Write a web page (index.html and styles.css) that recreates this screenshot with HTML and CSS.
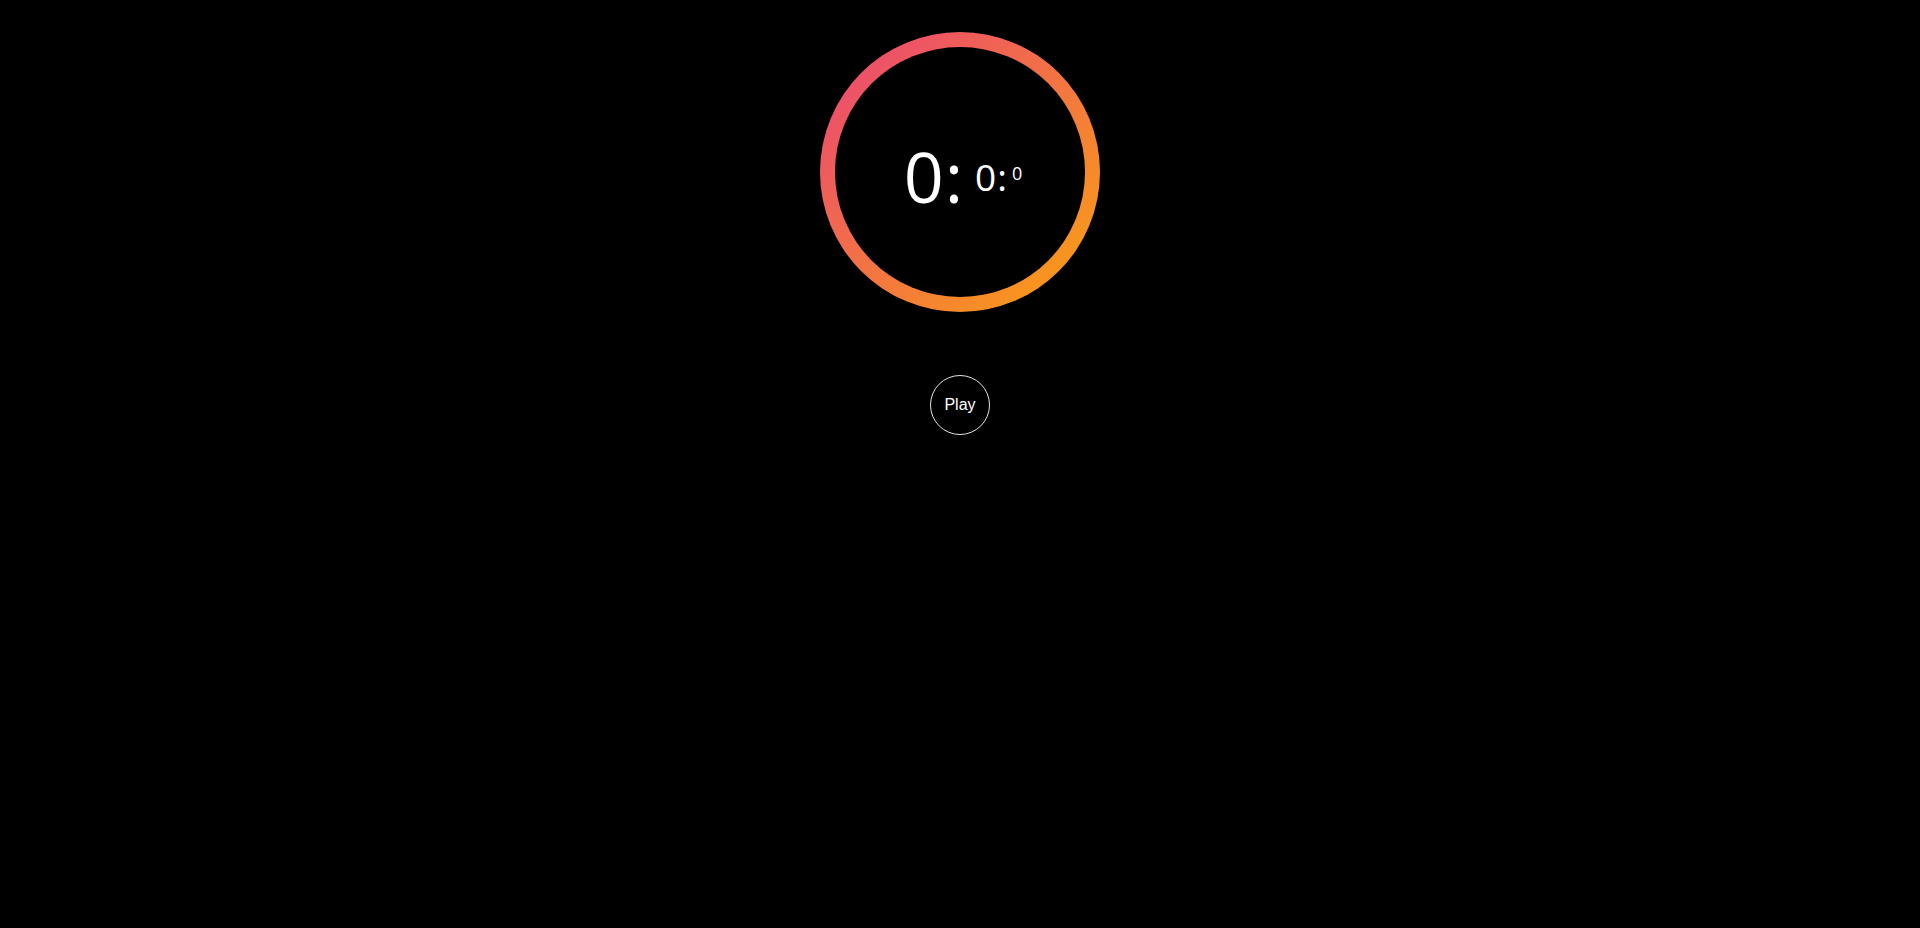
FILE: index.html
```html
<!DOCTYPE html>
<html>
<head>
<meta charset="utf-8">
<title>Timer</title>
<link rel="stylesheet" href="styles.css">
</head>
<body>
<main class="app">
  <div class="ring">
    <div class="face">
      <div class="time">
        <span class="unit unit-h">0<span class="colon">:</span></span>
        <span class="unit unit-m">0<span class="colon">:</span></span>
        <span class="unit unit-s">0</span>
      </div>
    </div>
  </div>
  <button class="play">Play</button>
</main>
</body>
</html>
```

FILE: styles.css
```css
html, body {
  margin: 0;
  padding: 0;
  background: #000;
  height: 100%;
}
.app {
  display: flex;
  flex-direction: column;
  align-items: center;
  padding-top: 32px;
}
.ring {
  width: 280px;
  height: 280px;
  box-sizing: border-box;
  padding: 15px;
  border-radius: 50%;
  background: linear-gradient(135deg, #ea4377 0%, #fba30f 100%);
}
.face {
  width: 100%;
  height: 100%;
  border-radius: 50%;
  background: #000;
  display: flex;
  align-items: center;
  justify-content: center;
}
.time {
  display: flex;
  align-items: center;
  color: #fff;
  font-family: "Open Sans", "Noto Sans", sans-serif;
  font-weight: 400;
  line-height: 1;
  padding-left: 6px;
  padding-top: 8px;
}
.unit { white-space: nowrap; }
.unit-h { font-size: 70px; margin-right: 12px; }
.unit-m { font-size: 37px; margin-right: 5px; }
.unit-s { font-size: 18px; margin-top: -6px; }
.colon { margin-left: 1px; }
.play {
  margin-top: 63px;
  width: 60px;
  height: 60px;
  border-radius: 50%;
  border: 1px solid #e4e4e4;
  background: #000;
  color: #fff;
  font-family: "Liberation Sans", Arial, sans-serif;
  font-size: 16px;
  padding: 0;
  cursor: pointer;
}
```
